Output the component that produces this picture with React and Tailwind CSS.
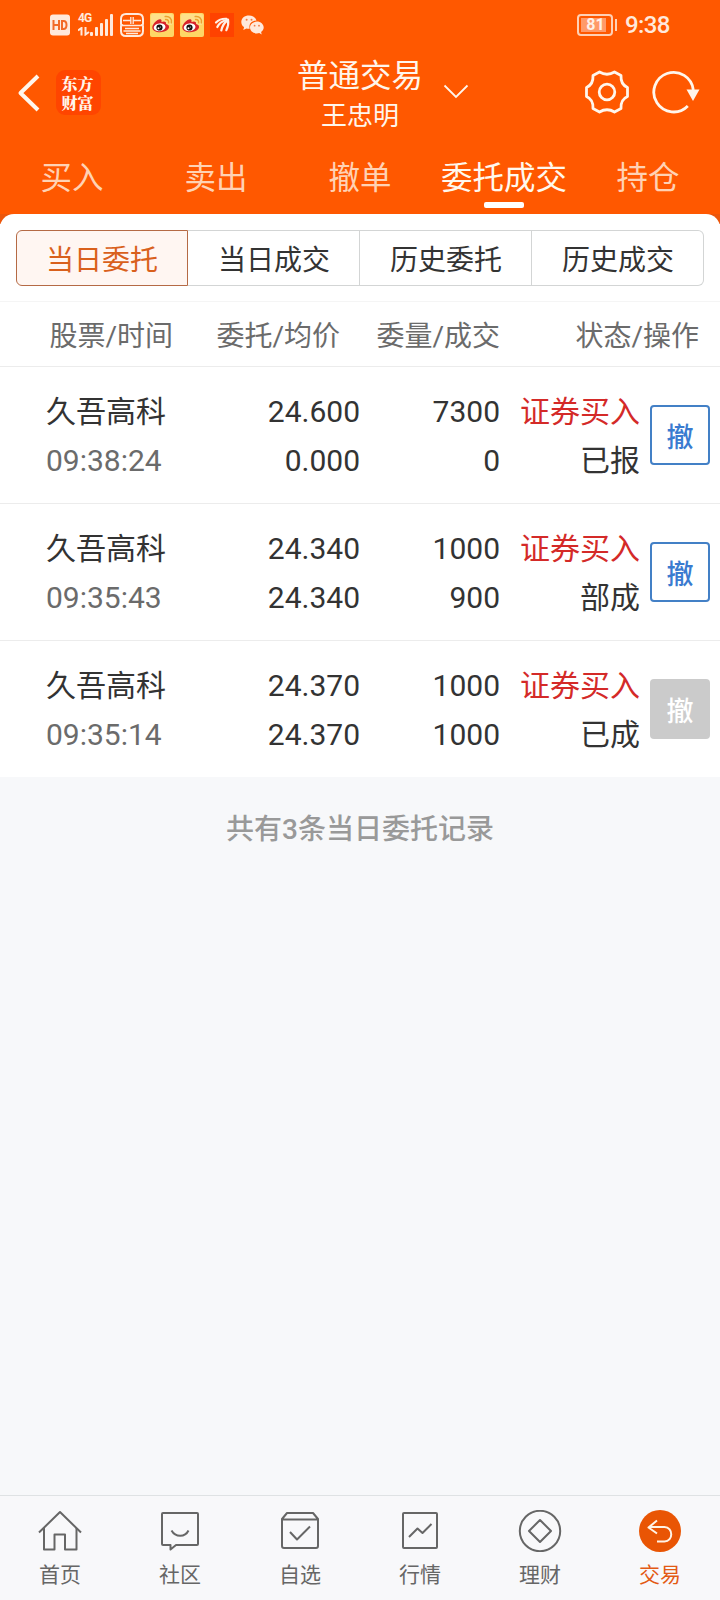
import { useState } from 'react'
import clsx from 'clsx'

const TABS = ['买入', '卖出', '撤单', '委托成交', '持仓']
const SEGMENTS = ['当日委托', '当日成交', '历史委托', '历史成交']

const ORDERS = [
  { id: 1, name: '久吾高科', time: '09:38:24', price: '24.600', avg: '0.000', qty: '7300', filled: '0', side: '证券买入', status: '已报', cancelable: true },
  { id: 2, name: '久吾高科', time: '09:35:43', price: '24.340', avg: '24.340', qty: '1000', filled: '900', side: '证券买入', status: '部成', cancelable: true },
  { id: 3, name: '久吾高科', time: '09:35:14', price: '24.370', avg: '24.370', qty: '1000', filled: '1000', side: '证券买入', status: '已成', cancelable: false }
]

function WeiboIcon() {
  return (
    <svg className="size-6" viewBox="0 0 24 24" fill="none">
      <rect width="24" height="24" rx="2" fill="#fed766" />
      <rect x="1" y="1" width="22" height="11" rx="2" fill="#fee08a" />
      <path d="M15.600 6.600c2-.3 3.400 1.100 3 3.200M15.200 3.600c4.200-.7 7 2.300 6.200 6.200" stroke="#eda12c" strokeWidth="1.500" strokeLinecap="round" />
      <path d="M2.300 14.500C2.500 10.500 7.800 5.600 10.500 6.300c1.300.4 1.200 1.700.9 2.700 2.300-.9 5-.9 4.700 1.900 3.500.8 3.700 3.700 1.700 5.600-4.400 4.300-15.700 3.400-15.500-2z" fill="#d8232a" />
      <ellipse cx="9.600" cy="14.300" rx="5.900" ry="3.900" fill="#fff" transform="rotate(-7 9.600 14.300)" />
      <circle cx="9.500" cy="14.500" r="3.100" fill="#111" />
      <circle cx="8.500" cy="15.300" r="1" fill="#fff" />
      <circle cx="10.400" cy="14" r=".5" fill="#fff" />
    </svg>
  )
}

function StatusBar() {
  return (
    <div className="flex h-12 items-center pl-[50px] pr-[50px] pt-px text-[#ffe9dc]">
      <svg className="h-[22px] w-5" viewBox="0 0 20 22">
        <rect x="0" y=".5" width="20" height="21" rx="3" fill="currentColor" />
        <path d="M3.500 6v10M9 6v10M3.500 11H9M12 7v8h1.500c2 0 3-1.300 3-4s-1-4-3-4z" stroke="#f26a28" strokeWidth="2" fill="none" />
      </svg>
      <div className="ml-2 flex h-6 w-[35px]">
        <div className="flex w-3 flex-col">
          <span className="text-[12px] font-bold leading-[11px] tracking-[-1px]">4G</span>
          <svg className="mt-[3px] h-[9px] w-3" viewBox="0 0 12 9" fill="none" stroke="currentColor" strokeWidth="2">
            <path d="M0 3.500 3.500 1v7.500M7.500 0v7.500L11 5" />
          </svg>
        </div>
        <svg className="h-6 w-[23px]" viewBox="0 0 23 24" fill="currentColor">
          <rect x="0" y="19" width="3" height="4" rx="1" />
          <rect x="5" y="14" width="3" height="9" rx="1" />
          <rect x="10" y="10" width="3" height="13" rx="1" />
          <rect x="15" y="6" width="3" height="17" rx="1" />
          <rect x="20" y="1" width="3" height="22" rx="1" />
        </svg>
      </div>
      <svg className="ml-[7px] size-6" viewBox="0 0 24 24" fill="none" stroke="currentColor" strokeWidth="1.300">
        <path d="M6 1h12q5 0 5 5v5l-1 1 1 1v5q0 5-5 5H6q-5 0-5-5v-5l1-1-1-1V6q0-5 5-5z" strokeWidth="2" />
        <path d="M2 12.500h20M3 7.500h7.500M13.500 7.500H21M10.800 4v7M13.200 4v7M5 15.500h14M3.500 18h17M6 20.500h12" />
      </svg>
      <div className="ml-1.5 flex gap-1.5">
        <WeiboIcon />
        <WeiboIcon />
        <svg className="size-6" viewBox="0 0 24 24">
          <rect width="24" height="24" fill="#ff4200" />
          <g fill="none" stroke="#fff0e6" strokeWidth="2.200" strokeLinecap="round">
            <path d="M16.500 5.800C12.500 5.500 8.500 7 6 9.500" />
            <path d="M16.500 7C12.500 8 9 10.500 7.300 14" />
            <path d="M17.300 7.500C14.500 9.500 12.300 13 11.300 17.500" />
            <path d="M18 6.500c.7 3.700 0 7.500-1.700 10.700" />
          </g>
        </svg>
      </div>
      <svg className="ml-[7px] h-5 w-[23px]" viewBox="0 0 23 20">
        <path d="M8 .5C3.500.5.3 3.200.3 7c0 2.200 1 4 2.800 5.100L2.300 15l3.200-1.600c1 .3 2.200.4 3.200.3C7.500 9 10.500 5.800 15.500 5.500 14.500 2.500 11.700.5 8 .5z" fill="currentColor" />
        <path d="M15.900 6.600c-4 0-6.900 2.700-6.900 5.900s2.900 5.900 6.900 5.900c.8 0 1.600-.1 2.300-.4l2.500 1.400-.6-2.400c1.600-1.100 2.600-2.700 2.600-4.500 0-3.200-3-5.900-6.800-5.900z" fill="currentColor" />
        <g fill="#f27a45">
          <circle cx="5.600" cy="4.800" r="1" />
          <circle cx="10.500" cy="4.800" r="1" />
          <circle cx="13.600" cy="10.700" r=".9" />
          <circle cx="18" cy="10.700" r=".9" />
        </g>
      </svg>
      <div className="ml-auto flex items-center">
        <div className="flex h-[22px] w-9 items-center rounded-[4px] border-2 border-[#ffd0b5] p-0.5">
          <div className="flex h-full w-[25px] items-center justify-center bg-[#ff9a69]">
            <span className="pl-1 text-[16px] font-bold leading-[14px] text-[#fff1e8]">81</span>
          </div>
        </div>
        <div className="ml-0.5 h-3 w-0.5 bg-[#ffd0b5]" />
        <span className="ml-2 w-[45px] pt-px text-[24px] font-medium leading-none tracking-[-0.6px]">9:38</span>
      </div>
    </div>
  )
}

function Header() {
  return (
    <div className="grid h-[90px] grid-cols-[1fr_128px_1fr] text-[#fff6ec]">
      <div className="flex items-start pl-[17px] pt-[22px]">
        <svg className="mt-[4px] h-[38px] w-[23px]" viewBox="0 0 23 38" fill="none" stroke="currentColor" strokeWidth="4" strokeLinejoin="round">
          <path d="M21 2 3.500 19 21 36" />
        </svg>
        <div className="ml-4 flex size-[45px] items-center justify-center rounded-[9px] bg-[#ff4500] pr-0.5">
          <span className="w-8 break-all font-['Noto_Serif_CJK_SC','Noto_Sans_CJK_SC',serif] text-[16px] font-black leading-[19px]">东方财富</span>
        </div>
      </div>
      <div className="flex flex-col items-center whitespace-nowrap pt-[9px]">
        <span className="text-[31.500px] leading-10">普通交易</span>
        <span className="text-[26px] leading-[38px]">王忠明</span>
      </div>
      <div className="flex items-start pl-[19px] pr-5">
        <svg className="mt-[36px] h-[15px] w-[26px]" viewBox="0 0 26 15" fill="none" stroke="currentColor" strokeWidth="1.800">
          <path d="M1.500 1.500 13 13 24.500 1.500" />
        </svg>
        <svg className="ml-auto mt-[22px] h-11 w-[46px]" viewBox="-22 -22 46 44" fill="none" stroke="currentColor" strokeWidth="2.800" strokeLinejoin="round">
          <path d="M-7.500-20Q0-15.500 7.500-20L14-16.500Q13.500-7.500 20.500-4.500V4.500Q13.500 7.500 14 16.500L7.500 20Q0 15.500-7.500 20L-14 16.500Q-13.500 7.500-20.500 4.500V-4.500Q-13.500-7.500-14-16.500Z" />
          <circle r="7.800" />
        </svg>
        <svg className="ml-[21px] mt-[22px] h-11 w-12" viewBox="0 0 48 44" fill="none">
          <path d="M35.800 36A19.800 19.800 0 1 1 41.300 20" stroke="currentColor" strokeWidth="2.800" />
          <path d="M34.500 19.500h13L41 31z" fill="currentColor" />
        </svg>
      </div>
    </div>
  )
}

function OrderRow({ order }) {
  return (
    <div className="flex h-[137px] border-b border-[#ececec] pt-5 text-[30px] leading-[49px] text-[#333] last:h-[136px] last:border-b-0">
      <div className="flex w-[200px] flex-col pl-[46px]">
        <span>{order.name}</span>
        <span className="text-[#6b6b6b]">{order.time}</span>
      </div>
      <div className="flex w-[160px] flex-col text-right">
        <span>{order.price}</span>
        <span>{order.avg}</span>
      </div>
      <div className="flex w-[140px] flex-col text-right">
        <span>{order.qty}</span>
        <span>{order.filled}</span>
      </div>
      <div className="flex w-[140px] flex-col text-right">
        <span className="text-[#d42a28]">{order.side}</span>
        <span>{order.status}</span>
      </div>
      <button
        type="button"
        disabled={!order.cancelable}
        className={clsx(
          'ml-2.5 mt-[18px] flex size-[60px] items-center justify-center rounded-[4px] pt-[6px] text-[27px] font-medium leading-none',
          order.cancelable ? 'border-2 border-[#4380c6] text-[#3a7bd0]' : 'bg-[#cbcbcb] text-white'
        )}
      >
        撤
      </button>
    </div>
  )
}

const NAV = [
  {
    label: '首页',
    icon: (
      <>
        <path d="M1 22.500 22 2l21 20.500" />
        <path d="M6 18v21.500h10.500v-15h10.500v15h11.500V18" />
      </>
    )
  },
  {
    label: '社区',
    icon: (
      <>
        <path d="M5 3h34q1 0 1 1v30q0 1-1 1H18l-5.500 4.500V35H5q-1 0-1-1V4q0-1 1-1z" />
        <path d="M13.500 20.500c4 7 13.500 7 17 0" />
      </>
    )
  },
  {
    label: '自选',
    icon: (
      <>
        <path d="M9 3h26l5 6v27q0 2-2 2H6q-2 0-2-2V9zM4 9.500h36" />
        <path d="m12 22 7 7.500L32 16.500" />
      </>
    )
  },
  {
    label: '行情',
    icon: (
      <>
        <rect x="5" y="3" width="34" height="35" rx="1" />
        <path d="m11 27 8.500-8.500 5 4.500 9-9" />
      </>
    )
  },
  {
    label: '理财',
    icon: (
      <>
        <circle cx="22" cy="21" r="20.200" />
        <path d="m22 10 11 11-11 11-11-11z" />
      </>
    )
  },
  {
    label: '交易',
    icon: (
      <>
        <circle cx="22" cy="21" r="21" fill="#e95504" stroke="none" />
        <path d="M19 10.500 10.500 17.500 19 23.500M11 17h15.500c9 0 9 14.500 0 14.500H19" stroke="#fff3e6" />
      </>
    )
  }
]

function BottomNav() {
  return (
    <nav className="grid h-[105px] grid-cols-6 border-t border-[#dfe2e4] bg-[#f8f8fa] pt-[14px]">
      {NAV.map((item, i) => (
        <div key={item.label} className={clsx('flex flex-col items-center', i === 5 ? 'text-[#e35a14]' : 'text-[#666]')}>
          <svg className="h-[42px] w-11" viewBox="0 0 44 42" fill="none" stroke="currentColor" strokeWidth="2" strokeLinejoin="round">
            {item.icon}
          </svg>
          <span className="mt-2 text-[21px] leading-[30px]">{item.label}</span>
        </div>
      ))}
    </nav>
  )
}

export default function App() {
  const [tab, setTab] = useState(3)
  const [segment, setSegment] = useState(0)

  return (
    <div className="flex h-[1600px] w-[720px] flex-col bg-[#f7f8fa] font-[Roboto,'Noto_Sans_CJK_SC',sans-serif]">
      <header className="h-[214px] bg-[#ff5800]">
        <StatusBar />
        <Header />
        <div className="grid h-[76px] grid-cols-5">
          {TABS.map((label, i) => (
            <button
              key={label}
              type="button"
              onClick={() => setTab(i)}
              className={clsx('flex flex-col items-center whitespace-nowrap pt-[21px] text-[31.500px] leading-10', i === tab ? 'text-[#fff8ee]' : 'text-[#ffd2b4]')}
            >
              {label}
              {i === tab ? <span className="mt-[3px] h-1.5 w-10 rounded-[2px] bg-white" /> : null}
            </button>
          ))}
        </div>
      </header>

      <div className="bg-linear-to-b from-[#ec560a] from-[10px] to-white to-[10px]">
        <div className="h-[88px] rounded-t-[14px] border-b border-[#f5f5f5] bg-white px-4 pt-4">
          <div className="grid h-14 grid-cols-4">
            {SEGMENTS.map((label, i) => (
              <button
                key={label}
                type="button"
                onClick={() => setSegment(i)}
                className={clsx(
                  'border pt-1.5 text-[28px] leading-none first:rounded-l-[6px] last:rounded-r-[6px]',
                  i === segment ? 'border-[#b56a45] bg-[#fff6f2] text-[#d9601c]' : 'border-l-0 border-[#d3d5d5] pl-px text-[#333]'
                )}
              >
                {label}
              </button>
            ))}
          </div>
        </div>
      </div>

      <div className="flex h-[65px] items-center border-b border-[#ececec] bg-white pt-1.5 text-right text-[28px] text-[#6b6b6b]">
        <span className="w-[173px]">股票/时间</span>
        <span className="w-[167px]">委托/均价</span>
        <span className="w-[160px]">委量/成交</span>
        <span className="w-[199px]">状态/操作</span>
      </div>

      <div className="bg-white">
        {ORDERS.map((order) => (
          <OrderRow key={order.id} order={order} />
        ))}
      </div>

      <p className="pt-[33px] text-center text-[28px] font-medium leading-10 text-[#999]">共有3条当日委托记录</p>

      <div className="mt-auto">
        <BottomNav />
      </div>
    </div>
  )
}
